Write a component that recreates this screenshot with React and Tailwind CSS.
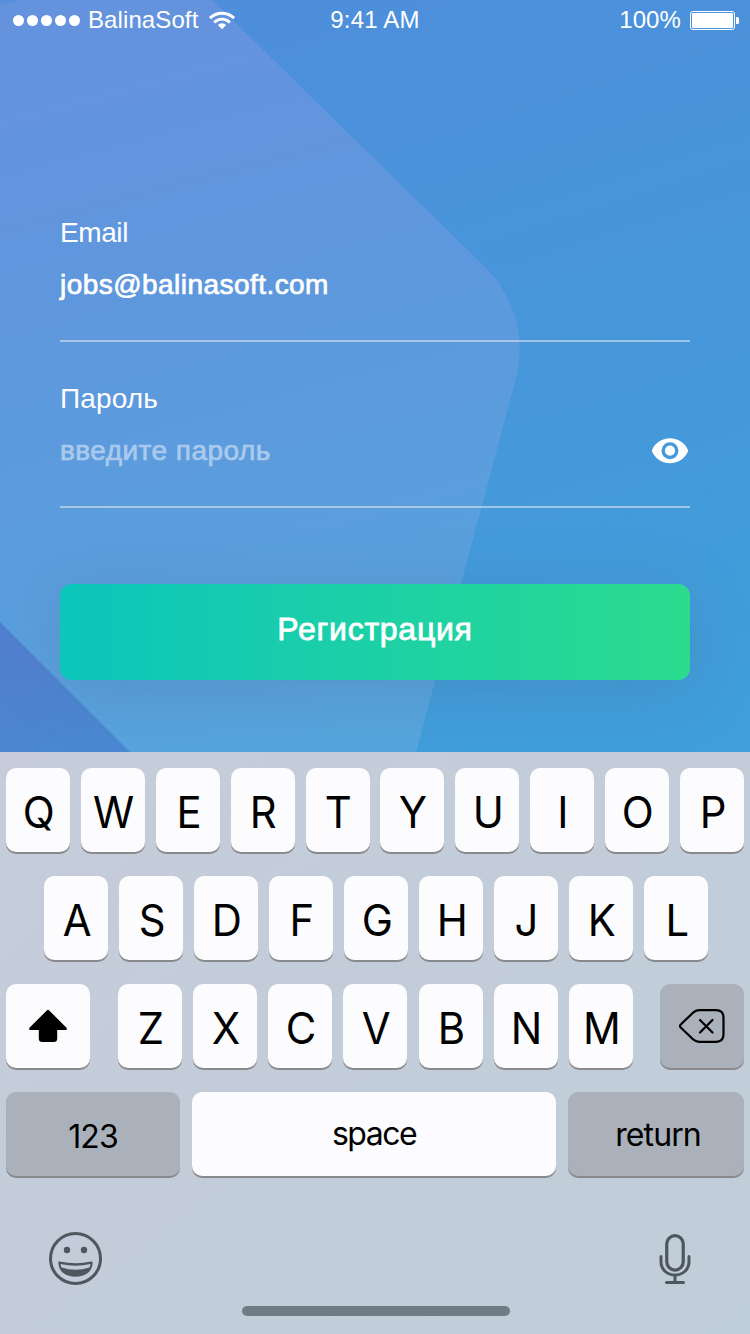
const ROW_ONE = ['Q', 'W', 'E', 'R', 'T', 'Y', 'U', 'I', 'O', 'P'];
const ROW_TWO = ['A', 'S', 'D', 'F', 'G', 'H', 'J', 'K', 'L'];
const ROW_THREE = ['Z', 'X', 'C', 'V', 'B', 'N', 'M'];

function Backdrop() {
  return (
    <svg className="absolute inset-0" width="750" height="752" viewBox="0 0 750 752" aria-hidden="true">
      <defs>
        <linearGradient id="base" gradientUnits="userSpaceOnUse" x1="260" y1="0" x2="500" y2="752">
          <stop offset="0" stopColor="#4e8edb" />
          <stop offset="1" stopColor="#409eda" />
        </linearGradient>
        <linearGradient id="panel" gradientUnits="userSpaceOnUse" x1="60" y1="0" x2="260" y2="752">
          <stop offset="0" stopColor="#6592dd" />
          <stop offset="0.5" stopColor="#5d99dd" />
          <stop offset="1" stopColor="#57a4dd" />
        </linearGradient>
        <linearGradient id="wedge" gradientUnits="userSpaceOnUse" x1="0" y1="640" x2="50" y2="752">
          <stop offset="0" stopColor="#517fcf" />
          <stop offset="1" stopColor="#4b87d2" />
        </linearGradient>
      </defs>
      <rect width="750" height="752" fill="url(#base)" />
      <path d="M0 5L20 0H212L484 266C514 296 526 334 516 378L416 752H0Z" fill="url(#panel)" />
      <path d="M0 0H20L0 5Z" fill="#588edb" />
      <path d="M0 622L130 752H0Z" fill="url(#wedge)" />
    </svg>
  );
}

function WifiIcon() {
  return (
    <svg width="26" height="19" viewBox="0 0 26 19" fill="none" stroke="white" aria-hidden="true">
      <path d="M1 7.2A17 17 0 0 1 25 7.2" strokeWidth="3" />
      <path d="M5.2 11.4A11 11 0 0 1 20.8 11.4" strokeWidth="2.8" />
      <path d="M13 18.2L8.8 14A6.2 6.2 0 0 1 17.2 14Z" fill="white" stroke="none" />
    </svg>
  );
}

function StatusBar() {
  return (
    <header className="grid h-10 grid-cols-3 items-center pl-[13px] pr-[11px] text-2xl leading-none">
      <div className="flex items-center">
        <div className="flex gap-[3px]">
          {[0, 1, 2, 3, 4].map((dot) => (
            <span key={dot} className="size-[11px] rounded-full bg-white" />
          ))}
        </div>
        <span className="ml-2 mr-[11px] tracking-[0.1px]">BalinaSoft</span>
        <WifiIcon />
      </div>
      <span className="pr-0.5 text-center tracking-[0.2px]">9:41 AM</span>
      <div className="flex items-center justify-end">
        <span className="mr-[9px] tracking-[0.1px]">100%</span>
        <svg width="49" height="19" viewBox="0 0 49 19" aria-hidden="true">
          <rect x="0.5" y="0.5" width="44" height="18" rx="2.5" fill="none" stroke="white" />
          <rect x="2" y="2" width="41" height="15" rx="1.2" fill="white" />
          <path d="M46 6H47.5Q49 6 49 7.5V11.5Q49 13 47.5 13H46Z" fill="white" />
        </svg>
      </div>
    </header>
  );
}

function EyeIcon() {
  return (
    <svg width="38" height="26" viewBox="0 0 38 26" aria-hidden="true">
      <path
        fill="white"
        fillRule="evenodd"
        d="M19 .3C10.700 .3 3.500 5.300 .8 12.700C3.500 20.200 10.700 25.200 19 25.200S34.500 20.200 37.200 12.700C34.500 5.300 27.300 .3 19 .3ZM19 21.200A8.500 8.500 0 1 1 19 4.200A8.500 8.500 0 0 1 19 21.200ZM19 7.600A5.100 5.100 0 1 0 19 17.800A5.100 5.100 0 0 0 19 7.600Z"
      />
    </svg>
  );
}

function Key({ children, className = 'w-16 bg-[#fcfcfe] text-[44px]' }) {
  return (
    <button
      type="button"
      className={`flex h-[84px] shrink-0 items-center justify-center rounded-[10px] leading-none shadow-[0_2px_0_#898a8d] ${className}`}
    >
      {children}
    </button>
  );
}

function LetterKeys({ letters }) {
  return letters.map((letter) => (
    <Key key={letter}>
      <span className="scale-x-95 pl-0.5 pt-1">{letter}</span>
    </Key>
  ));
}

function Keyboard() {
  return (
    <section className="relative flex h-[582px] flex-col bg-linear-to-br from-[#c6ccda] via-[#c2cdd9] to-[#c0ced9] px-1.5 pt-4 font-['Inter',sans-serif] text-black">
      <div className="flex flex-col gap-6">
        <div className="flex justify-between">
          <LetterKeys letters={ROW_ONE} />
        </div>
        <div className="flex justify-between pl-[38px] pr-9">
          <LetterKeys letters={ROW_TWO} />
        </div>
        <div className="flex">
          <Key className="mr-7 w-[84px] bg-[#fcfcfe]">
            <svg width="40" height="34" viewBox="0 0 40 34" aria-hidden="true">
              <path
                d="M19 1.300Q20 .3 21 1.300L38.300 18.500Q40 21 37.500 21H29.200V29.500Q29.200 33 25.700 33H14.300Q10.800 33 10.800 29.500V21H2.500Q0 21 1.700 18.500Z"
                fill="black"
              />
            </svg>
          </Key>
          <div className="mr-[27px] flex w-[515px] justify-between">
            <LetterKeys letters={ROW_THREE} />
          </div>
          <Key className="w-[84px] bg-[#abb1bb]">
            <svg width="46" height="34" viewBox="0 0 46 34" fill="none" stroke="black" strokeWidth="2.2" strokeLinecap="round" strokeLinejoin="round" aria-hidden="true">
              <path d="M2 15.200L14.500 3.300Q17 1.200 20.500 1.200H37Q44.500 1.200 44.500 8.700V25.300Q44.500 32.800 37 32.800H20.500Q17 32.800 14.500 30.700L2 18.800Q0 17 2 15.200Z" />
              <path d="M21 11L33.500 23.500M33.500 11L21 23.500" />
            </svg>
          </Key>
        </div>
        <div className="flex justify-between">
          <Key className="w-[174px] bg-[#abb1bb] text-[32px]">
            <span className="pt-1.5 tracking-[-1px]">123</span>
          </Key>
          <Key className="w-[364px] bg-[#fcfcfe] text-[32px]">
            <span className="tracking-[-1.5px]">space</span>
          </Key>
          <Key className="w-44 bg-[#abb1bb] text-[32px]">
            <span className="pl-1 pt-0.5 tracking-[-0.9px]">return</span>
          </Key>
        </div>
      </div>
      <div className="mt-14 flex justify-between pl-[43px] pr-[53px]">
        <svg width="53" height="54" viewBox="0 0 53 54" aria-hidden="true">
          <circle cx="26.500" cy="26.500" r="25" fill="none" stroke="#50565e" strokeWidth="3" />
          <circle cx="18" cy="18" r="3.200" fill="#50565e" />
          <circle cx="35" cy="18" r="3.200" fill="#50565e" />
          <path d="M10.500 30.700Q26.500 34.300 42.500 30.700C42 39.300 35.500 43.600 26.500 43.600S11 39.300 10.500 30.700Z" fill="#50565e" stroke="#50565e" strokeWidth="2.400" strokeLinejoin="round" />
          <path d="M11.500 32Q26.500 35.500 41.500 32Q41.300 34 40.300 35.600Q26.500 40 12.700 35.600Q11.700 34 11.500 32Z" fill="#c1ccd8" />
        </svg>
        <svg className="mt-0.5" width="32" height="52" viewBox="0 0 32 52" fill="none" stroke="#50565e" strokeWidth="3" strokeLinecap="round" aria-hidden="true">
          <rect x="7.750" y="1.600" width="16.500" height="34.500" rx="8.250" strokeWidth="3.200" />
          <path d="M2 22.500V27.500C2 35.500 8 41 16 41S30 35.500 30 27.500V22.500M16 41V48.500M7.500 48.500H24.500" />
        </svg>
      </div>
      <div className="ml-[236px] mt-5 h-2.5 w-[268px] rounded-full bg-[#707c84]" />
    </section>
  );
}

export default function App() {
  return (
    <main className="relative h-[1334px] w-[750px] overflow-hidden font-['Liberation_Sans',Arial,sans-serif] text-white">
      <Backdrop />
      <div className="relative flex h-[752px] flex-col">
        <StatusBar />
        <form className="flex flex-col px-[60px] pt-[177px]">
          <div className="flex h-[125px] flex-col border-b-2 border-[#dde3ec]/60 text-[28px] leading-8">
            <label className="tracking-[-0.4px]">Email</label>
            <span className="mt-5 tracking-[0.45px] [-webkit-text-stroke:0.7px_white]">jobs@balinasoft.com</span>
          </div>
          <div className="mt-[41px] flex h-[125px] flex-col border-b-2 border-[#dde3ec]/60 text-[28px] leading-8">
            <label className="tracking-[0.15px]">Пароль</label>
            <div className="mt-5 flex items-start justify-between">
              <span className="tracking-[0.45px] text-[#a9caed] [-webkit-text-stroke:0.7px_#a9caed]">введите пароль</span>
              <span className="mr-px mt-[3px]"><EyeIcon /></span>
            </div>
          </div>
          <button
            type="button"
            className="mt-[76px] h-24 rounded-xl bg-linear-to-r from-[#0cc5bb] to-[#2bdb8e] pb-1.5 text-[32px] leading-none tracking-[0.75px] shadow-[0_10px_60px_rgba(76,108,146,0.28)] [-webkit-text-stroke:0.8px_white]"
          >
            Регистрация
          </button>
        </form>
      </div>
      <Keyboard />
    </main>
  );
}
